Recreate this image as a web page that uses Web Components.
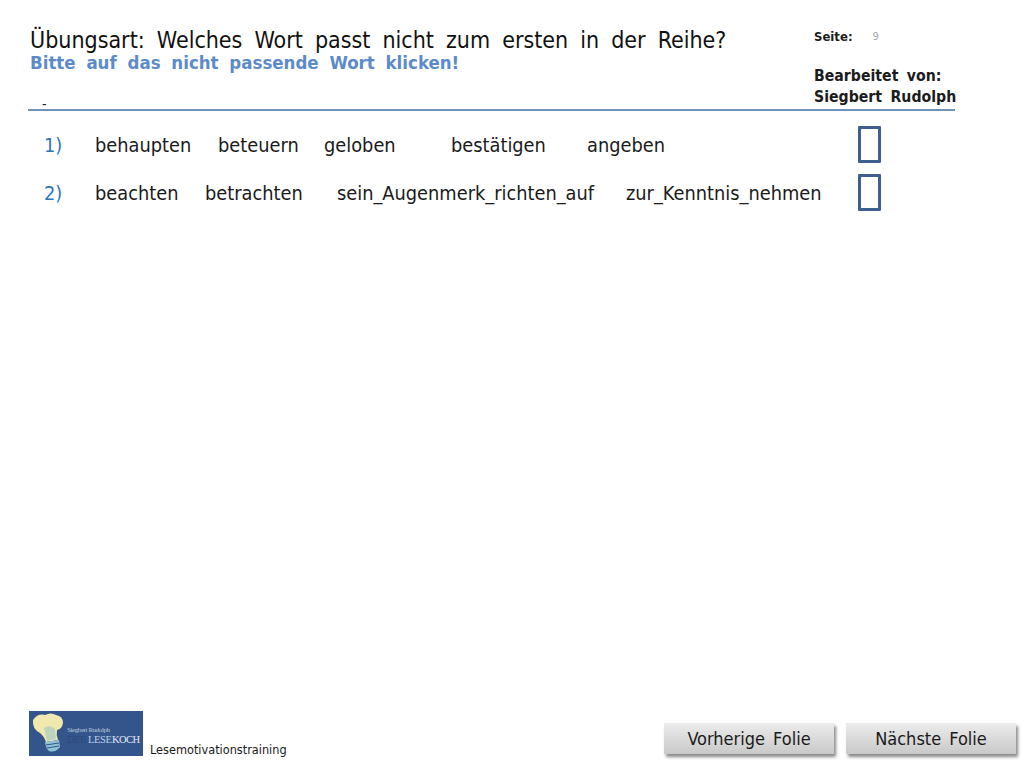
<!DOCTYPE html>
<html lang="de">
<head>
<meta charset="utf-8">
<title>Lesemotivationstraining</title>
<style>
  html, body { margin: 0; height: 100%; background: #fff; }
  body { --ui-font: "DejaVu Sans Condensed", "DejaVu Sans", sans-serif; font-family: var(--ui-font); }
</style>
</head>
<body>
<slide-page>
  <slide-header slot="header"></slide-header>
  <exercise-row slot="rows" num="1)" words="behaupten:123,beteuern:106,geloben:127,bestätigen:136,angeben:0"></exercise-row>
  <exercise-row slot="rows" num="2)" words="beachten:110,betrachten:132,sein_Augenmerk_richten_auf:289,zur_Kenntnis_nehmen:0"></exercise-row>
  <slide-footer slot="footer"></slide-footer>
</slide-page>

<script>
class SlidePage extends HTMLElement {
  constructor() {
    super();
    this.attachShadow({ mode: "open" });
    this.shadowRoot.innerHTML = `
      <style>
        :host { display: flex; flex-direction: column; width: 1024px; height: 768px; overflow: hidden; }
        .rows { display: flex; flex-direction: column; gap: 11px; padding: 15px 0 0 44px; flex: 1; }
      </style>
      <slot name="header"></slot>
      <div class="rows"><slot name="rows"></slot></div>
      <slot name="footer"></slot>
    `;
  }
}

class SlideHeader extends HTMLElement {
  constructor() {
    super();
    this.attachShadow({ mode: "open" });
    this.shadowRoot.innerHTML = `
      <style>
        :host { display: block; width: 927px; margin-left: 28px; height: 111px; box-sizing: border-box; border-bottom: 2px solid #6f93bb; }
        .wrap { display: flex; justify-content: space-between; height: 100%; }
        .left { padding: 27px 0 0 2px; display: flex; flex-direction: column; }
        h1 { margin: 0; font: 400 23px/26px var(--ui-font); color: #111; word-spacing: 5.5px; white-space: nowrap; }
        h2 { margin: -1px 0 0; font: 700 18.5px/21px var(--ui-font); color: #5b8bc9; word-spacing: 5px; white-space: nowrap; }
        .dash { font: 400 14px/12px var(--ui-font); color: #222; margin: 25px 0 0 12px; }
        .right { width: 141px; padding-top: 28px; color: #1c1c1c; font-weight: 700; }
        .page { display: flex; gap: 20px; font-size: 13px; line-height: 18px; }
        .page span { color: #aaa; font-weight: 400; font-size: 11px; }
        .by { margin-top: 19px; font-size: 15.7px; line-height: 21px; word-spacing: 3.5px; white-space: nowrap; }
      </style>
      <div class="wrap">
        <div class="left">
          <h1>Übungsart: Welches Wort passt nicht zum ersten in der Reihe?</h1>
          <h2>Bitte auf das nicht passende Wort klicken!</h2>
          <div class="dash">-</div>
        </div>
        <div class="right">
          <div class="page">Seite: <span>9</span></div>
          <div class="by">Bearbeitet von:<br>Siegbert Rudolph</div>
        </div>
      </div>
    `;
  }
}

class ExerciseRow extends HTMLElement {
  connectedCallback() {
    if (this.shadowRoot) return;
    this.attachShadow({ mode: "open" });
    const words = this.getAttribute("words").split(",").map((w) => {
      const [text, width] = w.split(":");
      return `<span style="${width > 0 ? `width:${width}px` : ""}">${text}</span>`;
    }).join("");
    this.shadowRoot.innerHTML = `
      <style>
        :host { display: flex; align-items: center; height: 37px; font: 400 19.8px/24px var(--ui-font); color: #1a1a1a; }
        .num { width: 51px; margin-top: 2px; color: #2e75b6; }
        .words { display: flex; width: 763px; margin-top: 2px; white-space: nowrap; }
        .box { box-sizing: border-box; width: 23px; height: 37px; border: 3px solid #3f5f8f; border-radius: 1px; }
      </style>
      <div class="num">${this.getAttribute("num")}</div>
      <div class="words">${words}</div>
      <div class="box"></div>
    `;
  }
}

class SlideFooter extends HTMLElement {
  constructor() {
    super();
    this.attachShadow({ mode: "open" });
    this.shadowRoot.innerHTML = `
      <style>
        :host { display: flex; align-items: flex-end; height: 57px; padding: 0 8px 12px 29px; }
        .logo { display: block; width: 114px; height: 45px; flex: none; }
        .brand { font: 400 12.6px/14px var(--ui-font); color: #1a1a1a; margin: 0 0 -1px 7px; flex: 1; }
        .btns { display: flex; gap: 12px; margin-bottom: 2px; }
      </style>
      <svg class="logo" viewBox="0 0 114 45">
        <rect width="114" height="45" fill="#34558c"/>
        <path d="M4 9 Q9 2 16 4 Q22 1 27 4 Q34 5 34 12 Q33 18 28 19 Q27 24 29 29 L17 31 Q15 25 11 22 Q3 18 4 9Z" fill="#f1e8ae"/>
        <path d="M15 17 Q21 13 26 18 L27 28 L18 30Z" fill="#a9cfc0" opacity=".75"/>
        <path d="M16 31 L30 29 L31 36 Q26 42 20 40 Q17 38 16 31Z" fill="#8fc3d6"/>
        <path d="M17 34 L30 32 M18 37 L30 35" stroke="#34558c"/>
        <text x="38" y="21" font-family="Liberation Serif, serif" font-size="7" textLength="43" fill="#b9c6dc">Siegbert Rudolph</text>
        <text x="38" y="32" font-family="Liberation Serif, serif" font-size="10.5" textLength="20" fill="#2f4a7c">DER</text>
        <text x="59" y="32" font-family="Liberation Serif, serif" font-size="10.5" textLength="24" fill="#b9d0ea">LESE</text>
        <text x="83" y="32" font-family="Liberation Serif, serif" font-size="10.5" textLength="28" fill="#e4e9f2">KOCH</text>
      </svg>
      <div class="brand">Lesemotivationstraining</div>
      <div class="btns">
        <nav-button>Vorherige Folie</nav-button>
        <nav-button>Nächste Folie</nav-button>
      </div>
    `;
  }
}

class NavButton extends HTMLElement {
  constructor() {
    super();
    this.attachShadow({ mode: "open" });
    this.shadowRoot.innerHTML = `
      <style>
        :host { display: flex; align-items: center; justify-content: center; width: 170px; height: 31px;
          background: linear-gradient(#ececec, #c9c9c9); box-shadow: 2px 3px 3px #8a8a8a;
          font: 400 18px/20px var(--ui-font); color: #1a1a1a; word-spacing: 3px; }
      </style>
      <slot></slot>
    `;
  }
}

customElements.define("slide-page", SlidePage);
customElements.define("slide-header", SlideHeader);
customElements.define("exercise-row", ExerciseRow);
customElements.define("slide-footer", SlideFooter);
customElements.define("nav-button", NavButton);
</script>
</body>
</html>
